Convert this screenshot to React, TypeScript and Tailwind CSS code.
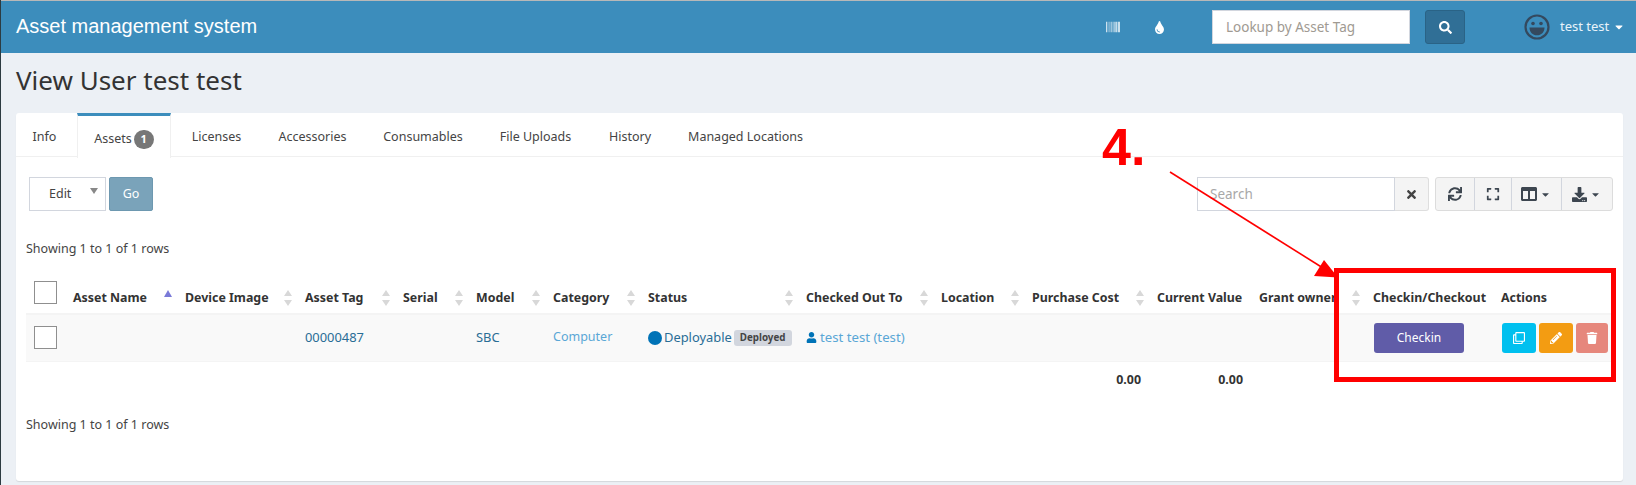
import React from 'react';
import {
  FaBarcode, FaTint, FaSearch, FaTimes, FaSync, FaExpand, FaColumns, FaDownload,
  FaUser, FaRegClone, FaPencilAlt, FaTrash, FaCaretDown,
} from 'react-icons/fa';

const tabs = [
  { label: 'Info', width: 'w-[61px] pr-[4px]' },
  { label: 'Assets', width: 'w-[94px]', active: true, badge: 1 },
  { label: 'Licenses', width: 'w-[89px] pl-[2px]' },
  { label: 'Accessories', width: 'w-[105px]' },
  { label: 'Consumables', width: 'w-[116px]' },
  { label: 'File Uploads', width: 'w-[109px]' },
  { label: 'History', width: 'w-[80px]' },
  { label: 'Managed Locations', width: 'w-[151px]' },
];

const columns = [
  { label: 'Asset Name', width: 112, sort: 'asc' },
  { label: 'Device Image', width: 120, sort: 'both' },
  { label: 'Asset Tag', width: 98, sort: 'both' },
  { label: 'Serial', width: 73, sort: 'both' },
  { label: 'Model', width: 77, sort: 'both' },
  { label: 'Category', width: 95, sort: 'both' },
  { label: 'Status', width: 158, sort: 'both' },
  { label: 'Checked Out To', width: 135, sort: 'both' },
  { label: 'Location', width: 91, sort: 'both' },
  { label: 'Purchase Cost', width: 125, sort: 'both' },
  { label: 'Current Value', width: 102 },
  { label: 'Grant owner', width: 114, sort: 'both' },
  { label: 'Checkin/Checkout', width: 128 },
  { label: 'Actions', width: 119 },
];

const SortIcon = ({ mode }: { mode?: string }) => {
  if (!mode) return null;
  if (mode === 'asc') {
    return <span className="mb-[10px] h-0 w-0 shrink-0 border-x-[4px] border-b-[7px] border-x-transparent border-b-[#7a7ad8]"></span>;
  }
  return (
    <span className="flex shrink-0 flex-col gap-[4px]">
      <span className="h-0 w-0 border-x-[4px] border-b-[6px] border-x-transparent border-b-[#d8d8d8]"></span>
      <span className="h-0 w-0 border-x-[4px] border-t-[6px] border-x-transparent border-t-[#d8d8d8]"></span>
    </span>
  );
};

const Checkbox = () => <div className="h-[23px] w-[23px] border border-[#8f8f8f] bg-white"></div>;

const ToolButton = ({ width, children }: { width: string; children: React.ReactNode }) => (
  <div className={`flex h-full items-center justify-center gap-[3px] border-r border-[#d2d6de] last:border-r-0 ${width}`}>
    {children}
  </div>
);

export default function App() {
  return (
    <div className="relative h-[485px] w-[1636px] overflow-hidden border-l border-[#2c3b41] bg-[#ecf0f5] text-[12.5px] text-[#333]" style={{ fontFamily: '"Noto Sans", sans-serif' }}>
      <div className="h-px bg-[#b8b8b8]"></div>

      {/* Navbar */}
      <header className="flex h-[52px] items-center bg-[#3c8dbc] text-white">
        <div className="ml-[15px] w-[1089px] pb-[3px] text-[20px]" style={{ fontFamily: '"Liberation Sans", sans-serif' }}>
          Asset management system
        </div>
        <FaBarcode className="ml-[1px] text-[14px]" />
        <FaTint className="ml-[33px] text-[13px]" />
        <div className="ml-[46px] flex h-[34px] w-[198px] items-center border border-[#d2d6de] bg-white pl-[13px] text-[13.5px] text-[#a09a92]">
          Lookup by Asset Tag
        </div>
        <div className="ml-[15px] flex h-[34px] w-[40px] items-center justify-center rounded-[3px] border border-[#2a6386] bg-[#306f96]">
          <FaSearch className="text-[13px]" />
        </div>
        <svg className="ml-[59px]" width="26" height="26" viewBox="0 0 26 26">
          <circle cx="13" cy="13" r="11.5" fill="none" stroke="#34495e" strokeWidth="2.2" />
          <circle cx="9" cy="9.5" r="1.8" fill="#34495e" />
          <circle cx="17" cy="9.5" r="1.8" fill="#34495e" />
          <path d="M5.5 13.5h15c0 4.8-3.2 7.8-7.5 7.8s-7.5-3-7.5-7.8z" fill="#34495e" />
        </svg>
        <span className="ml-[10px] text-[13px] text-[#e8f3fa]">test test</span>
        <FaCaretDown className="ml-[4px] text-[12px]" />
      </header>

      <h1 className="ml-[15px] mt-[12px] h-[48px] text-[26px] leading-[30px] text-[#333]">View User test test</h1>

      {/* Card */}
      <main className="ml-[15px] h-[368px] w-[1607px] rounded-[3px] bg-white shadow-[0_1px_1px_rgba(0,0,0,0.1)]">
        <nav className="flex h-[44px] border-b border-[#f0f0f0] text-[#444]">
          {tabs.map(tab => (
            <div
              key={tab.label}
              className={`flex items-center justify-center gap-[2px] pt-[5px] ${tab.width} ${tab.active ? 'h-[45px] border-x border-t-[3px] border-x-[#f0f0f0] border-t-[#3c8dbc] bg-white pt-[1px]' : ''}`}
            >
              {tab.label}
              {tab.badge && (
                <span className="flex h-[19px] w-[20px] items-center justify-center rounded-full bg-[#777] text-[11px] font-bold text-white">
                  {tab.badge}
                </span>
              )}
            </div>
          ))}
        </nav>

        <div className="pl-[10px] pr-[10px]">
          {/* Toolbar */}
          <div className="mt-[20px] flex h-[34px] items-center">
            <div className="relative ml-[3px] flex h-full w-[77px] items-center border border-[#d2d6de] pl-[19px] text-[#444]">
              Edit
              <span className="absolute right-[7px] top-[10px] h-0 w-0 border-x-[4px] border-t-[6px] border-x-transparent border-t-[#888]"></span>
            </div>
            <div className="ml-[3px] flex h-full w-[44px] items-center justify-center rounded-[2px] border border-[#6d98b0] bg-[#7aa3ba] text-white">
              Go
            </div>

            <div className="ml-auto flex h-full w-[232px] rounded-[3px]">
              <div className="flex h-full w-[198px] items-center border border-[#d2d6de] pl-[12px] text-[13.5px] text-[#a8a8a8]">
                Search
              </div>
              <div className="flex h-full w-[34px] items-center justify-center rounded-r-[3px] border border-l-0 border-[#dedede] bg-[#f4f4f4]">
                <FaTimes className="text-[13px] text-[#444]" />
              </div>
            </div>
            <div className="ml-[6px] flex h-full w-[178px] rounded-[3px] border border-[#dcdcdc] bg-[#f4f4f4] text-[#3d4650]">
              <ToolButton width="w-[39px]"><FaSync className="text-[14px]" /></ToolButton>
              <ToolButton width="w-[38px]"><FaExpand className="text-[14px]" /></ToolButton>
              <ToolButton width="w-[50px]"><FaColumns className="text-[16px]" /><FaCaretDown className="text-[11px]" /></ToolButton>
              <ToolButton width="w-[51px]"><FaDownload className="text-[15px]" /><FaCaretDown className="text-[11px]" /></ToolButton>
            </div>
          </div>

          <div className="mt-[29px] leading-[18px] text-[#444]">Showing 1 to 1 of 1 rows</div>

          {/* Assets table */}
          <table className="mt-[8px] w-[1586px] table-fixed border-collapse text-left">
            <colgroup>
              <col className="w-[39px]" />
              {columns.map(col => <col key={col.label} style={{ width: col.width }} />)}
            </colgroup>
            <thead>
              <tr className="h-[48px] border-b-2 border-[#f4f4f4] align-bottom">
                <th className="pb-[9px] pl-[8px] font-normal"><Checkbox /></th>
                {columns.map(col => (
                  <th key={col.label} className="pb-[6px] pl-[8px] pr-[5px] font-bold text-[#333]">
                    <div className="flex items-center justify-between whitespace-nowrap text-[12.4px] leading-[18px]">
                      {col.label}
                      <SortIcon mode={col.sort} />
                    </div>
                  </th>
                ))}
              </tr>
            </thead>
            <tbody>
              <tr className="h-[47px] border-b border-[#f4f4f4] bg-[#f9f9f9]">
                <td className="pl-[8px]"><Checkbox /></td>
                <td></td>
                <td></td>
                <td className="pl-[8px] text-[12.9px] text-[#296d96]">00000487</td>
                <td></td>
                <td className="pl-[8px] text-[12.9px] text-[#296d96]">SBC</td>
                <td className="pl-[8px] text-[#5aa7d6]">Computer</td>
                <td className="pl-[8px]">
                  <div className="flex items-center whitespace-nowrap text-[12.9px] text-[#296d96]">
                    <span className="mr-[2px] h-[14px] w-[14px] rounded-full bg-[#0073b7]"></span>
                    Deployable
                    <span className="ml-[2px] rounded-[3px] bg-[#d2d6de] px-[6px] py-[2px] text-[9.8px] font-bold leading-[12px] text-[#444]">Deployed</span>
                  </div>
                </td>
                <td className="pl-[8px]">
                  <div className="flex items-center gap-[3px] whitespace-nowrap text-[13.2px] text-[#5aa7d6]">
                    <FaUser className="text-[11px] text-[#0073b7]" />
                    test test (test)
                  </div>
                </td>
                <td></td>
                <td></td>
                <td></td>
                <td></td>
                <td className="pl-[9px]">
                  <div className="flex h-[30px] w-[90px] items-center justify-center rounded-[3px] bg-[#605ca8] text-[12px] text-white">Checkin</div>
                </td>
                <td className="pl-[9px]">
                  <div className="flex gap-[3px] text-white">
                    <div className="flex h-[30px] w-[34px] items-center justify-center rounded-[3px] bg-[#00c0ef]"><FaRegClone className="text-[12px]" /></div>
                    <div className="flex h-[30px] w-[34px] items-center justify-center rounded-[3px] bg-[#f39c12]"><FaPencilAlt className="text-[12px]" /></div>
                    <div className="flex h-[30px] w-[32px] items-center justify-center rounded-[3px] bg-[#e6877c]"><FaTrash className="text-[12px]" /></div>
                  </div>
                </td>
              </tr>
            </tbody>
            <tfoot>
              <tr className="h-[38px] text-right text-[12.4px] font-bold">
                <td colSpan={10}></td>
                <td className="pr-[8px]">0.00</td>
                <td className="pr-[8px]">0.00</td>
                <td colSpan={3}></td>
              </tr>
            </tfoot>
          </table>

          <div className="mt-[17px] leading-[18px] text-[#444]">Showing 1 to 1 of 1 rows</div>
        </div>
      </main>

      {/* Red annotation over the screenshot */}
      <div className="absolute left-[1101px] top-[121px] text-[52px] font-bold leading-none text-[#ff0000]" style={{ fontFamily: '"Liberation Sans", sans-serif' }}>4.</div>
      <svg className="absolute left-0 top-0" width="1636" height="485" viewBox="0 0 1636 485">
        <line x1="1169" y1="172" x2="1322" y2="268" stroke="#ff0000" strokeWidth="1.6" />
        <polygon points="1337,277.5 1313,276 1323,260" fill="#ff0000" />
      </svg>
      <div className="absolute left-[1333px] top-[268px] h-[114px] w-[282px] border-[5px] border-[#ff0000]"></div>
    </div>
  );
}
